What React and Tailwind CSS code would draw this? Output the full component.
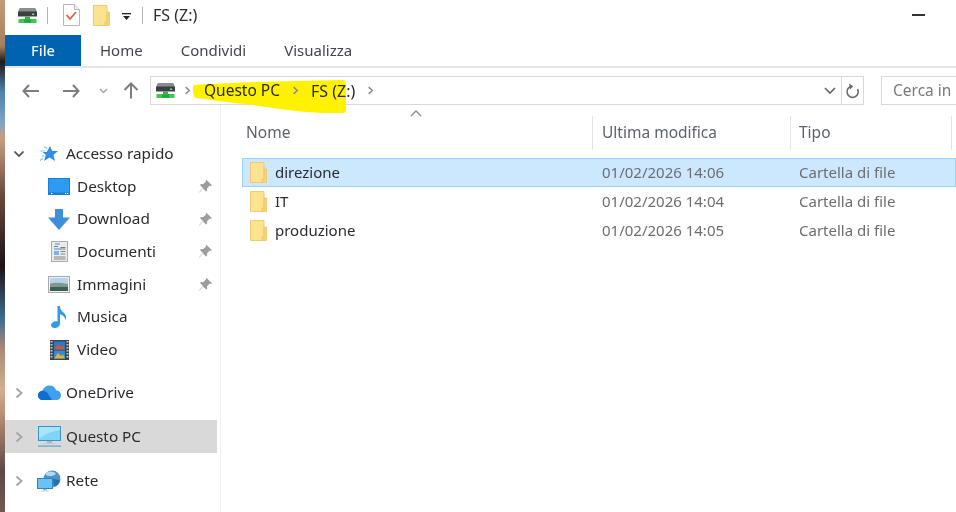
import React from "react";

const font = { fontFamily: '"Noto Sans", "Open Sans", sans-serif' };

function DriveIcon({ className = "" }) {
  return (
    <svg width="21" height="17" viewBox="0 0 21 17" className={className}>
      <path d="M3 1h15l2 4v4H1V5z" fill="#5f6466" />
      <rect x="1" y="5" width="19" height="4.5" fill="#3c4042" />
      <path d="M3 1h15l1.4 3H1.6z" fill="#8a8e90" />
      <rect x="15" y="6.5" width="2.2" height="1.5" fill="#6fe07a" />
      <rect x="8" y="9.5" width="5" height="3" fill="#35b548" />
      <rect x="1.5" y="12" width="18" height="4" rx="0.5" fill="#3fc653" />
      <rect x="7" y="12.5" width="7" height="3" fill="#22a336" />
    </svg>
  );
}

function Folder() {
  return (
    <svg width="17" height="21" viewBox="0 0 17 21">
      <path d="M0.5 0.5h13.5v20H0.5z" fill="#fde28f" stroke="#efca72" />
      <path d="M14 7h2.5v13.5H12v-3.5h2z" fill="#f8d277" stroke="#ecc468" strokeWidth="0.8" />
    </svg>
  );
}

function Chevron({ open = false, className = "", color = "#a6a6a6" }) {
  return (
    <svg width="12" height="12" viewBox="0 0 12 12" className={className}>
      {open ? (
        <path d="M1.5 3.5L6 8l4.5-4.5" fill="none" stroke="#4a4a4a" strokeWidth="1.7" />
      ) : (
        <path d="M3.5 1.5L8.5 6l-5 4.5" fill="none" stroke={color} strokeWidth="1.9" />
      )}
    </svg>
  );
}

function Pin() {
  return (
    <svg width="15" height="15" viewBox="0 0 15 15">
      <path d="M8.5 1l5.5 5.2-1.4.8-1-.4-2.6 2.8.2 2.1-1 1L5 9.4 1.5 13.6l-.4-.4L5 9l-3-3 1-1 2.1.2L8 2.6l-.3-.8z" fill="#9a9da0" />
    </svg>
  );
}

const DesktopIcon = () => (
  <svg width="22" height="17" viewBox="0 0 22 17">
    <rect width="22" height="17" fill="#1a7fd0" />
    <rect x="1" y="1" width="20" height="13.5" fill="#2b9bf4" />
    <rect x="3" y="15" width="1.3" height="1" fill="#fff" />
    <rect x="17" y="15" width="1.3" height="1" fill="#fff" />
    <rect x="19" y="15" width="1.3" height="1" fill="#fff" />
  </svg>
);
const DownloadIcon = () => (
  <svg width="22" height="21" viewBox="0 0 22 21">
    <path d="M7 0h8v8.5h7L11 21 0 8.5h7z" fill="#3d8fdc" />
  </svg>
);
const DocIcon = () => (
  <svg width="17" height="21" viewBox="0 0 17 21">
    <rect x="0.5" y="0.5" width="16" height="20" fill="#e9ebec" stroke="#a9adb0" />
    <path d="M4 3h5M3 5.5h4" stroke="#3b8fd8" strokeWidth="1.2" />
    <path d="M9.5 6.5h5M3 8h11.5" stroke="#7a8084" strokeWidth="1" />
    <rect x="3" y="10" width="5" height="4" fill="#7ab4e6" />
    <path d="M9.5 10.5h5M9.5 13h5M3 16h11.5M3 18h11.5" stroke="#80868a" strokeWidth="1" />
  </svg>
);
const ImageIcon = () => (
  <svg width="22" height="17" viewBox="0 0 22 17">
    <rect x="0.5" y="0.5" width="21" height="16" fill="#eef1f3" stroke="#a7abae" />
    <rect x="2" y="2" width="18" height="6" fill="#b7d5ea" />
    <path d="M2 8c5-2 10-1 18 0v3H2z" fill="#7f9a8c" />
    <rect x="2" y="11" width="18" height="4" fill="#3f5e52" />
  </svg>
);
const MusicIcon = () => (
  <svg width="17" height="22" viewBox="0 0 17 22">
    <path d="M6.5 0H9c0 3.5 1.5 5 4 7 2.5 2.2 2.5 5 1.2 7.5 .3-3-1.4-5-5.2-6.2V17.5C9 20 6.5 22 3.5 22 1.3 22 0 20.8 0 19.2c0-2.2 2.6-4 5-4 .6 0 1.1 .1 1.5 .3z" fill="#2f9bec" />
  </svg>
);
const VideoIcon = () => (
  <svg width="19" height="20" viewBox="0 0 19 20">
    <rect width="19" height="20" fill="#3f4548" />
    <path d="M1.5 1v18M17.5 1v18" stroke="#c4c8ca" strokeWidth="2" strokeDasharray="1.6 1.4" />
    <rect x="4" y="1.5" width="11" height="8" fill="#2c78c8" />
    <path d="M4 9.5L8 4l3 3 2-1.5 2 4z" fill="#c8583e" />
    <rect x="4" y="10.5" width="11" height="8" fill="#2f8ad8" />
    <path d="M4 18.5L8 13l3 3 2-1.5 2 4z" fill="#e0b23c" />
  </svg>
);
const StarIcon = () => (
  <svg width="20" height="18" viewBox="0 0 20 18">
    <path d="M11 1l2.2 5H19l-4.5 3.7L16 16l-5.4-3.4L5 16l1.8-6.3L3.5 7h4.3z" fill="#2f8fe6" />
    <path d="M5 1.5l3.5 2M1.5 6h4M3 11.5l2-1M1 15.5l3-2" stroke="#7cc3f2" strokeWidth="1.2" />
  </svg>
);
const CloudIcon = () => (
  <svg width="23" height="15" viewBox="0 0 23 15">
    <path d="M5 15C2 15 0 13 0 10.2 0 7.6 2 6 4.2 5.8 5.5 2.5 8.5 0.5 11.5 0.5c3.2 0 5.8 2 6.6 4.8 2.8 .2 4.9 2.2 4.9 4.9 0 2.8-2.2 4.8-4.9 4.8z" fill="#3fa0ee" />
    <path d="M5 15C2 15 0 13 0 10.2 0 7.6 2 6 4.2 5.8 6 5.5 8 6.5 9.5 8L14 15z" fill="#0f6fc8" />
  </svg>
);
const PcIcon = () => (
  <svg width="23" height="21" viewBox="0 0 23 21">
    <rect x="0.5" y="0.5" width="22" height="14" fill="#7fd4fa" stroke="#3a93c9" />
    <path d="M1 1h21v3C14 5 7 8 1 13z" fill="#a8e4fc" />
    <rect x="9" y="15" width="5" height="2" fill="#a9b6bf" />
    <rect x="6" y="17" width="11" height="1" fill="#c0ccd4" />
    <rect x="0" y="19.5" width="23" height="1.2" fill="#5aa6d4" />
  </svg>
);
const NetIcon = () => (
  <svg width="24" height="22" viewBox="0 0 24 22">
    <circle cx="15" cy="9" r="8.5" fill="#4d93cc" />
    <path d="M9 3c3-2 8-2 10 1-2 2-7 3-10 1z" fill="#b5d8ef" />
    <path d="M16 9c3 0 5 1 7 1-1 4-3 6-6 6z" fill="#2b6fa8" />
    <rect x="0.5" y="8.5" width="15" height="10" fill="#69c3f2" stroke="#2f86be" />
    <rect x="6" y="19" width="4" height="1.5" fill="#a9b6bf" />
    <rect x="4" y="20.5" width="8" height="1" fill="#c0ccd4" />
  </svg>
);

function NavRoot({ icon, label, selected, open, className = "" }) {
  return (
    <div className={`flex h-[33px] items-center ${selected ? "bg-[#d9d9d9]" : ""} ${className}`}>
      <div className="ml-[8px] flex w-[12px] justify-center"><Chevron open={open} /></div>
      <div className="ml-[11px] flex w-[26px] justify-center">{icon}</div>
      <span className="ml-[4px] text-[#2b2b33]">{label}</span>
    </div>
  );
}

function NavSub({ icon, label, pinned }) {
  return (
    <div className="flex h-[32.7px] items-center pl-[42px]">
      <div className="flex w-[24px] justify-center">{icon}</div>
      <span className="ml-[6px] flex-1 text-[#2b2b33]">{label}</span>
      {pinned && <span className="mr-[4px] flex"><Pin /></span>}
    </div>
  );
}

function FileRow({ name, date, selected }) {
  return (
    <div
      className={`flex h-[29px] items-center border ${selected ? "border-[#99d1ff] bg-[#cce8ff]" : "border-transparent"}`}
    >
      <div className="ml-[7px] flex w-[17px]"><Folder /></div>
      <span className="ml-[8px] w-[327px] text-[#2b2b33]">{name}</span>
      <span className="w-[197px] text-[#6d6d72]">{date}</span>
      <span className="text-[#6d6d72]">Cartella di file</span>
    </div>
  );
}

export default function App() {
  return (
    <div className="flex h-[512px] w-[956px] overflow-hidden bg-white text-[15.3px] leading-none blur-[0.35px]" style={font}>
      <div className="w-[5px] shrink-0 bg-[linear-gradient(180deg,#c49a78_0%,#a8805f_9%,#1f1a1a_12%,#4d83ad_18%,#7fa5c2_24%,#c89e80_27%,#6c4a3e_38%,#1b1414_52%,#3d6a8f_62%,#a68a78_68%,#d2ae92_76%,#a07c66_84%,#5d4a44_92%,#6e5a52_100%)]" />
      <div className="flex min-w-0 flex-1 flex-col">
        {/* title bar */}
        <div className="flex h-[35px] shrink-0 items-center pb-[5px]">
          <div className="ml-[12px] flex"><DriveIcon /></div>
          <div className="ml-[9px] h-[17px] w-px bg-[#b5b5b5]" />
          <svg width="17" height="22" viewBox="0 0 17 22" className="ml-[15px]">
            <path d="M0.5 0.5h11l5 5v16H0.5z" fill="#fff" stroke="#b8b8b8" />
            <path d="M11.5 0.5v5h5" fill="#eee" stroke="#b8b8b8" />
            <path d="M3.5 11l3.5 4 6-7" fill="none" stroke="#e0603a" strokeWidth="1.8" />
          </svg>
          <div className="ml-[13px] flex"><Folder /></div>
          <svg width="10" height="10" viewBox="0 0 10 10" className="ml-[12px] mt-[3px]">
            <rect y="1" width="9" height="1.3" fill="#222" />
            <path d="M1 4h7L4.5 8z" fill="#222" />
          </svg>
          <div className="ml-[10px] h-[17px] w-px bg-[#b5b5b5]" />
          <span className="ml-[10px] text-[16px] text-[#2b2b33]">FS (Z:)</span>
          <div className="ml-auto mr-[31px] h-[1.5px] w-[13px] bg-[#333]" />
        </div>

        {/* ribbon tabs */}
        <div className="flex h-[33px] shrink-0 items-stretch border-b-2 border-[#e6e6e6] text-[15px] text-[#444450]">
          <div className="flex w-[76px] items-center justify-center bg-[#0063b1] text-[14.6px] font-medium text-[#f0f6fb]">File</div>
          <div className="ml-[19px] flex items-center">Home</div>
          <div className="ml-[38px] flex items-center">Condividi</div>
          <div className="ml-[38px] flex items-center">Visualizza</div>
        </div>

        {/* address bar */}
        <div className="flex h-[37px] shrink-0 items-end">
          <div className="flex h-[29px] w-[145px] items-center">
            <svg width="18" height="14" viewBox="0 0 18 14" className="ml-[17px]">
              <path d="M7 1L1.5 7 7 13M2 7h15" fill="none" stroke="#7d7d7d" strokeWidth="2" />
            </svg>
            <svg width="18" height="14" viewBox="0 0 18 14" className="ml-[22px]">
              <path d="M11 1l5.5 6L11 13M16 7H1" fill="none" stroke="#7d7d7d" strokeWidth="2" />
            </svg>
            <svg width="9" height="6" viewBox="0 0 9 6" className="ml-[19px]">
              <path d="M1 1l3.5 3.5L8 1" fill="none" stroke="#a0a0a0" strokeWidth="1.4" />
            </svg>
            <svg width="16" height="17" viewBox="0 0 16 17" className="ml-[15px]">
              <path d="M8 1.5V16.5M1.5 8L8 1.5 14.5 8" fill="none" stroke="#7d7d7d" strokeWidth="2" />
            </svg>
          </div>
          <div className="relative flex h-[29px] w-[714px] shrink-0 items-center border border-[#d9d9d9]">
            <svg width="156" height="36" viewBox="0 0 156 36" className="absolute left-[41px] top-[2px]">
              <path d="M2 6C40 3 100 2 150 1c3 0 4 1 4 5l0 25c0 3-2 3-6 3-35 1-70-6-95-9C30 23 14 20 4 19 1 18 0 10 2 6z" fill="#fff200" />
            </svg>
            <div className="relative ml-[4px] flex"><DriveIcon /></div>
            <div className="relative ml-[7px] flex"><Chevron color="#8a8a8a" className="h-[9px] w-[9px]" /></div>
            <span className="relative ml-[12px] text-[15.5px] text-[#2a2a1a]">Questo PC</span>
            <div className="relative ml-[11px] flex"><Chevron color="#8a8a8a" className="h-[9px] w-[9px]" /></div>
            <span className="relative ml-[11px] text-[16px] text-[#2a2a1a]">FS (Z:)</span>
            <div className="relative ml-[11px] flex"><Chevron color="#8a8a8a" className="h-[9px] w-[9px]" /></div>
            <svg width="12" height="8" viewBox="0 0 12 8" className="ml-auto">
              <path d="M1 1l5 5 5-5" fill="none" stroke="#666" strokeWidth="1.6" />
            </svg>
            <div className="ml-[5px] flex h-full w-[22px] items-center justify-center border-l border-[#d9d9d9]">
              <svg width="15" height="16" viewBox="0 0 15 16">
                <path d="M12.5 6A5.6 5.6 0 1 1 7 3.2" fill="none" stroke="#6a6a6a" strokeWidth="1.6" />
                <path d="M4 0.5L8.2 3.2 5 6.5z" fill="#6a6a6a" />
              </svg>
            </div>
          </div>
          <div className="ml-[17px] flex h-[29px] flex-1 items-center border border-r-0 border-[#d9d9d9] pl-[11px] text-[15.5px] text-[#7a7a7a]">
            Cerca in
          </div>
        </div>

        {/* body */}
        <div className="flex min-h-0 flex-1">
          {/* navigation pane */}
          <div className="w-[216px] shrink-0 border-r border-[#f0f0f0] pt-[32px]">
            <div className="w-[212px]">
              <NavRoot open icon={<StarIcon />} label="Accesso rapido" />
              <NavSub icon={<DesktopIcon />} label="Desktop" pinned />
              <NavSub icon={<DownloadIcon />} label="Download" pinned />
              <NavSub icon={<DocIcon />} label="Documenti" pinned />
              <NavSub icon={<ImageIcon />} label="Immagini" pinned />
              <NavSub icon={<MusicIcon />} label="Musica" />
              <NavSub icon={<VideoIcon />} label="Video" />
              <NavRoot icon={<CloudIcon />} label="OneDrive" className="mt-[10px]" />
              <NavRoot selected icon={<PcIcon />} label="Questo PC" className="mt-[11px]" />
              <NavRoot icon={<NetIcon />} label="Rete" className="mt-[11px]" />
            </div>
          </div>

          {/* file list */}
          <div className="min-w-0 flex-1 pl-[21px]">
            <div className="relative flex h-[53px] items-start pt-[11px] text-[15.5px] text-[#5b6270]">
              <svg width="12" height="7" viewBox="0 0 12 7" className="absolute left-[168px] top-[5px]">
                <path d="M1 6l5-5 5 5" fill="none" stroke="#8a8a8a" strokeWidth="1.3" />
              </svg>
              <div className="flex h-[34px] w-[350px] items-center pl-[4px]">Nome</div>
              <div className="flex h-[34px] w-[198px] items-center border-l border-[#e5e5e5] pl-[9px]">Ultima modifica</div>
              <div className="flex h-[34px] w-[162px] items-center border-x border-[#e5e5e5] pl-[8px]">Tipo</div>
            </div>
            <div className="text-[15px]">
              <FileRow selected name="direzione" date="01/02/2026 14:06" />
              <FileRow name="IT" date="01/02/2026 14:04" />
              <FileRow name="produzione" date="01/02/2026 14:05" />
            </div>
          </div>
        </div>
      </div>
    </div>
  );
}
